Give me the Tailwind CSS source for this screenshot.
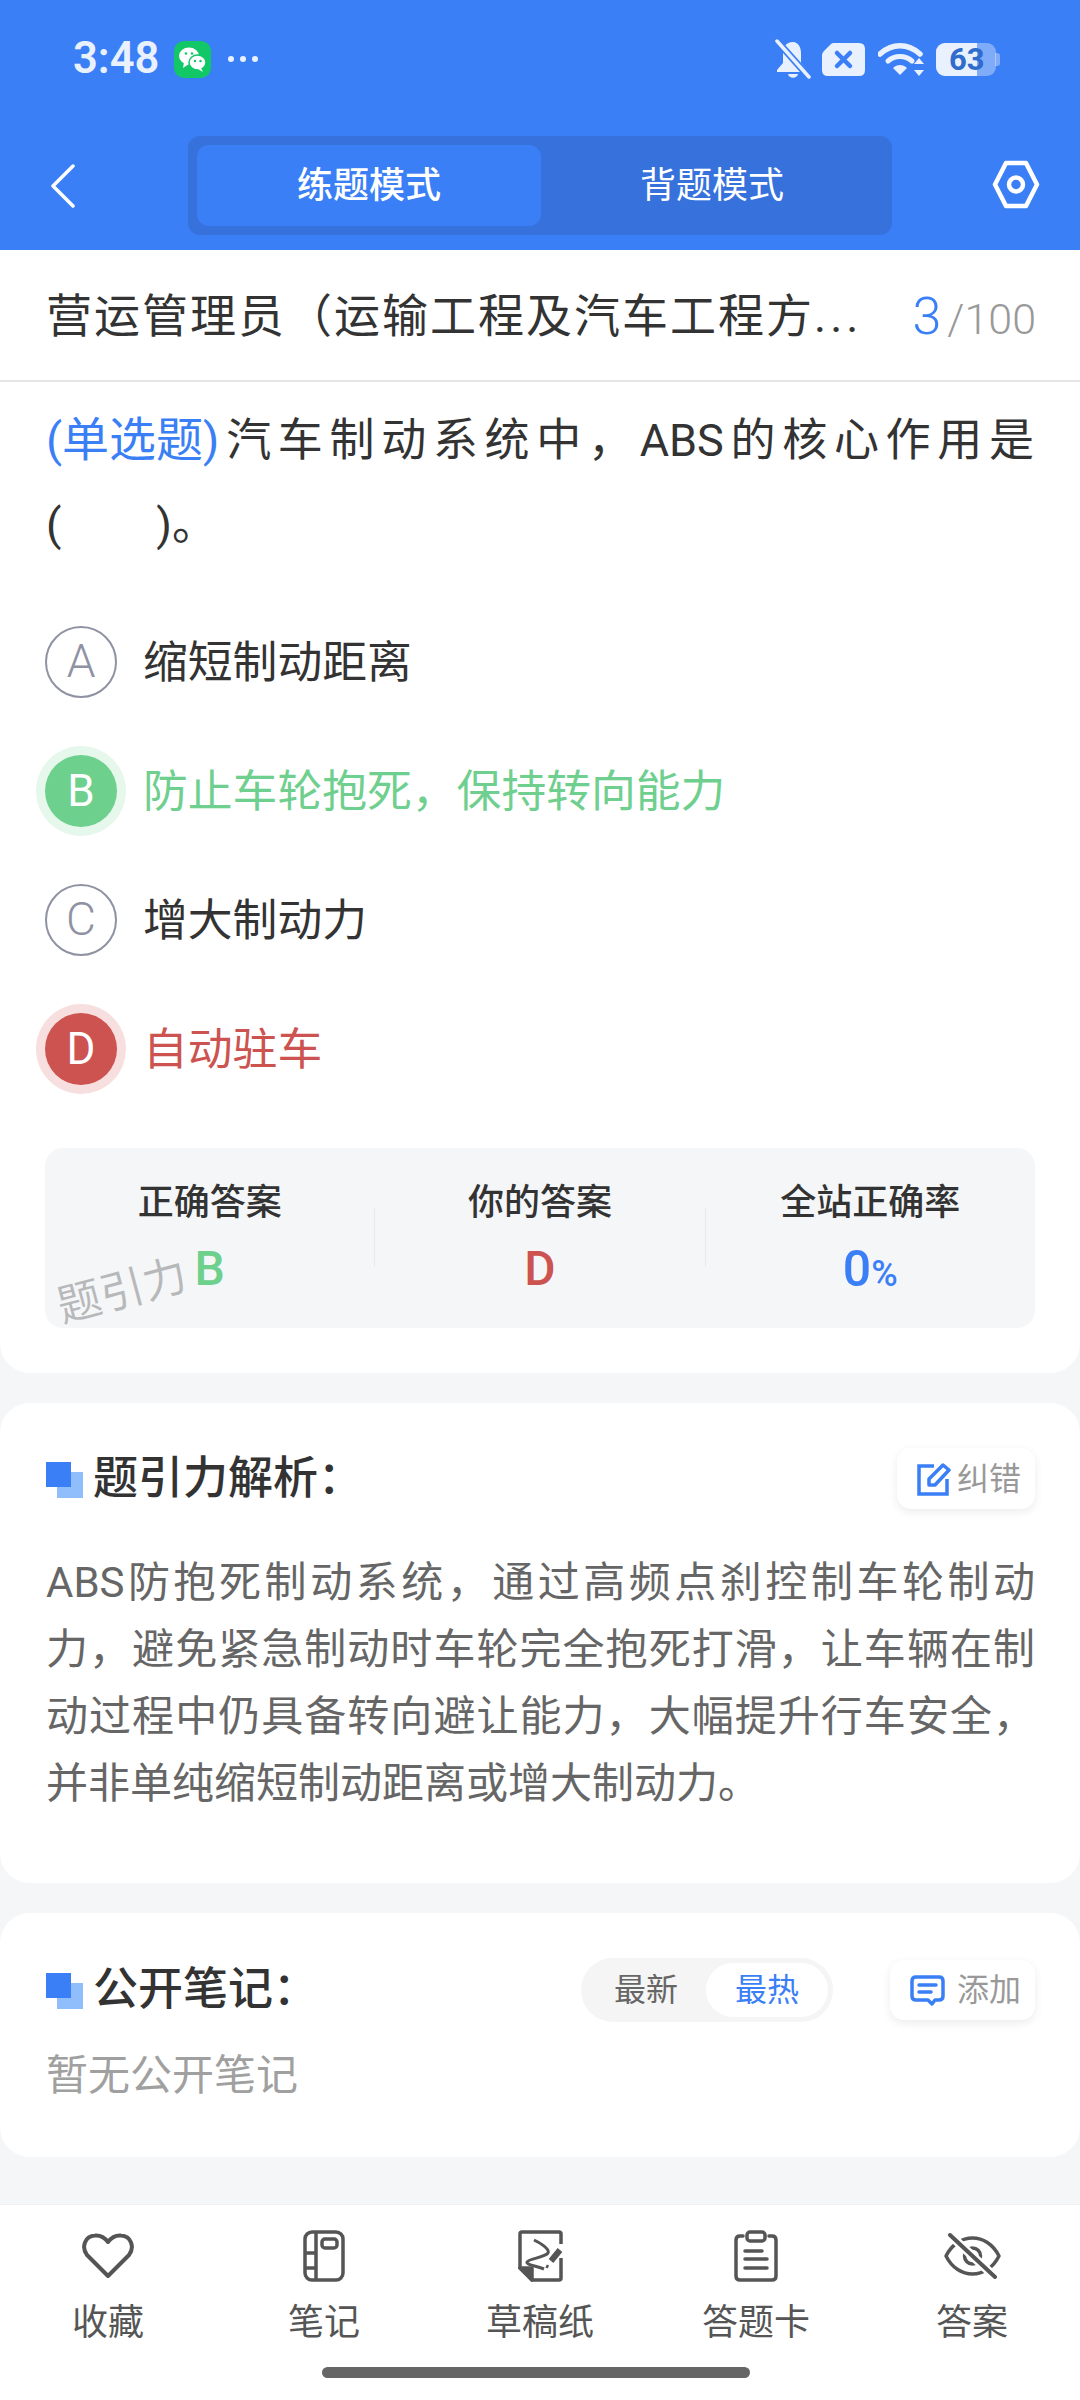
<!DOCTYPE html>
<html lang="zh-CN">
<head>
    <meta charset="UTF-8">
    <meta name="viewport" content="width=device-width, initial-scale=1.0">
    <script src="https://cdn.jsdelivr.net/npm/@tailwindcss/browser@4"></script>
    <title>练题模式</title>
</head>
<body class="bg-[#f5f6f8] font-['Roboto','Noto_Sans_CJK_SC',sans-serif] text-[#333]">
<div class="w-[1080px] h-[2400px] flex flex-col overflow-hidden">

    <!-- blue header -->
    <div class="bg-[#3b7ff6] h-[250px] shrink-0">
        <div class="h-[136px] flex items-start justify-between pl-[73px] pr-[80px] pt-[38px]">
            <div class="flex items-center h-[42px]">
                <span class="text-[43.500px] leading-[42px] font-semibold text-[#eaf1fe] w-[101px]">3:48</span>
                <svg width="37" height="37" viewBox="0 0 37 37">
                    <rect width="37" height="37" rx="10" fill="#11c766"/>
                    <ellipse cx="15" cy="15" rx="10" ry="8.5" fill="#fff"/>
                    <path d="M10 21l-1 6 6-4z" fill="#fff"/>
                    <ellipse cx="23.5" cy="21.5" rx="8.5" ry="7.5" fill="#fff" stroke="#11c766" stroke-width="1.5"/>
                    <path d="M27 27l2 4-5-3z" fill="#fff"/>
                    <circle cx="12" cy="12.5" r="1.3" fill="#11c766"/><circle cx="18" cy="12.5" r="1.3" fill="#11c766"/>
                    <circle cx="21" cy="20" r="1.2" fill="#11c766"/><circle cx="26.5" cy="20" r="1.2" fill="#11c766"/>
                </svg>
                <div class="flex gap-[6px] ml-[17px]">
                    <span class="w-[6px] h-[6px] rounded-full bg-[#eaf1fe]"></span>
                    <span class="w-[6px] h-[6px] rounded-full bg-[#eaf1fe]"></span>
                    <span class="w-[6px] h-[6px] rounded-full bg-[#eaf1fe]"></span>
                </div>
            </div>
            <div class="flex items-center h-[42px]">
                <svg width="36" height="40" viewBox="0 0 36 40" fill="#eaf1fe">
                    <path d="M18 3c-7 0-10 5-10 11v10l-6 7v2h30v-2l-6-7V14c0-6-3-11-8-11z"/>
                    <path d="M13 35h10c-1 5-9 5-10 0z"/>
                    <path d="M2 2l32 36" stroke="#3b7ff6" stroke-width="7"/>
                    <path d="M2 2l32 36" stroke="#eaf1fe" stroke-width="3.5" stroke-linecap="round"/>
                </svg>
                <svg class="ml-[11px]" width="43" height="33" viewBox="0 0 43 33">
                    <path d="M12 0h25q6 0 6 6v21q0 6-6 6H6q-6 0-6-6V12q0-2 2-4l7-7q1-1 3-1z" fill="#eaf1fe"/>
                    <path d="M15 10l13 13M28 10L15 23" stroke="#3b7ff6" stroke-width="4.5" stroke-linecap="round"/>
                </svg>
                <svg class="ml-[13px]" width="47" height="33" viewBox="0 0 47 33" fill="none">
                    <path d="M2 11c12-11 28-11 40 0" stroke="#eaf1fe" stroke-width="5.5" stroke-linecap="round"/>
                    <path d="M10 18c7-6 17-6 24 0" stroke="#eaf1fe" stroke-width="5" stroke-linecap="round"/>
                    <path d="M15 25c4-4 10-4 14 0l-7 7z" fill="#eaf1fe"/>
                    <path d="M41 15l5 6H36zM41 33l5-6H36z" fill="#eaf1fe"/>
                </svg>
                <div class="relative w-[64px] h-[33px] ml-[11px]">
                    <div class="absolute left-0 top-0 w-[60px] h-[33px] rounded-[9px] bg-white/35"></div>
                    <div class="absolute right-0 top-[10px] w-[5px] h-[13px] rounded-r-[3px] bg-white/35"></div>
                    <div class="absolute left-0 top-0 w-[41px] h-[33px] rounded-l-[9px] bg-[#eaf1fe]"></div>
                    <span class="absolute left-[13px] top-0 text-[31px] leading-[33px] font-bold text-[#2f6ccb]">63</span>
                </div>
            </div>
        </div>
        <div class="flex items-start">
            <svg class="ml-[50px] mt-[28px]" width="26" height="44" viewBox="0 0 26 44" fill="none">
                <path d="M23 2L3 22l20 20" stroke="#fff" stroke-width="3.5" stroke-linecap="round" stroke-linejoin="round"/>
            </svg>
            <div class="ml-[112px] w-[704px] h-[99px] rounded-[12px] bg-[#3771dc] flex items-center pl-[9px]">
                <div class="w-[344px] h-[81px] rounded-[12px] bg-[#3b7ff6] flex items-center justify-center text-[36px] font-medium text-white">练题模式</div>
                <div class="flex-1 text-center text-[36px] text-white pr-[9px]">背题模式</div>
            </div>
            <svg class="ml-[100px] mt-[24px]" width="48" height="49" viewBox="0 0 48 49" fill="none" stroke="#fff" stroke-width="4.5" stroke-linejoin="round">
                <path d="M14 3h20l11 21.500-11 21.500H14L3 24.500z"/>
                <circle cx="24" cy="24.500" r="7"/>
            </svg>
        </div>
    </div>

    <!-- question card -->
    <div class="bg-white rounded-b-[30px] shrink-0">
        <div class="h-[132px] border-b-2 border-[#e5e5e5] flex items-center justify-between pl-[46px] pr-[44px] pt-[3px]">
            <div class="w-[810px] text-[46px] tracking-[2px] whitespace-nowrap">营运管理员（运输工程及汽车工程方<span class="tracking-[4px]">...</span></div>
            <div class="flex items-baseline leading-none">
                <span class="text-[52px] font-light text-[#3b7ff6]">3</span>
                <span class="text-[43px] font-light text-[#999] ml-[6px]">/100</span>
            </div>
        </div>
        <p class="mt-[17px] mx-[46px] text-[45px] leading-[84px] text-justify">
            <span class="inline-block text-[47px] leading-[60px] text-[#3b7ff6]">(单选题)</span>汽车制动系统中，ABS的核心作用是(&nbsp;&nbsp;&nbsp;&nbsp;&nbsp;&nbsp;&nbsp;&nbsp;&#8239;)。
        </p>
        <div class="mt-[30px] px-[45px]">
            <div class="h-[129px] flex items-center">
                <span class="w-[72px] h-[72px] rounded-full border-2 border-[#8f92a3] flex items-center justify-center text-[46px] font-light text-[#8f92a3]">A</span>
                <span class="ml-[26px] mt-[2px] text-[44.800px]">缩短制动距离</span>
            </div>
            <div class="h-[129px] flex items-center text-[#6fcf8e]">
                <span class="w-[72px] h-[72px] rounded-full bg-[#6dd08c] ring-[9px] ring-[#e6f7ec] flex items-center justify-center text-[44px] text-white">B</span>
                <span class="ml-[26px] mt-[2px] text-[44.800px]">防止车轮抱死，保持转向能力</span>
            </div>
            <div class="h-[129px] flex items-center">
                <span class="w-[72px] h-[72px] rounded-full border-2 border-[#8f92a3] flex items-center justify-center text-[46px] font-light text-[#8f92a3]">C</span>
                <span class="ml-[26px] mt-[2px] text-[44.800px]">增大制动力</span>
            </div>
            <div class="h-[129px] flex items-center text-[#cd5350]">
                <span class="w-[72px] h-[72px] rounded-full bg-[#cd5350] ring-[9px] ring-[#f8dfdf] flex items-center justify-center text-[44px] text-white">D</span>
                <span class="ml-[26px] mt-[2px] text-[44.800px]">自动驻车</span>
            </div>
        </div>
        <div class="relative mt-[35px] mx-[45px] mb-[45px] h-[180px] rounded-[18px] bg-[#f5f6f8] flex items-start pt-[30px]">
            <div class="flex-1 text-center">
                <div class="text-[36px] leading-[50px] font-medium">正确答案</div>
                <div class="mt-[16px] text-[48px] leading-[50px] font-medium text-[#6dd08c]">B</div>
            </div>
            <div class="w-px h-[59px] mt-[30px] bg-[#e8e9eb]"></div>
            <div class="flex-1 text-center">
                <div class="text-[36px] leading-[50px] font-medium">你的答案</div>
                <div class="mt-[16px] text-[48px] leading-[50px] font-medium text-[#cd5350]">D</div>
            </div>
            <div class="w-px h-[59px] mt-[30px] bg-[#e8e9eb]"></div>
            <div class="flex-1 text-center">
                <div class="text-[36px] leading-[50px] font-medium">全站正确率</div>
                <div class="mt-[16px] text-[50px] leading-[50px] font-medium text-[#3b7ff6]">0<span class="text-[36px]">%</span></div>
            </div>
            <span class="absolute left-[11px] top-[118px] text-[44px] leading-[50px] -rotate-[15deg] text-black/25">题引力</span>
        </div>
    </div>

    <!-- analysis card -->
    <div class="mt-[30px] h-[480px] shrink-0 bg-white rounded-[30px] pt-[45px] pl-[46px] pr-[45px]">
        <div class="flex items-center justify-between h-[61px]">
            <div class="flex items-center">
                <div class="relative w-[37px] h-[36px] mt-[2px]">
                    <span class="absolute right-0 bottom-0 w-[26px] h-[26px] bg-[#90bdfb]"></span>
                    <span class="absolute left-0 top-0 w-[25px] h-[25px] bg-[#3b7ff6]"></span>
                </div>
                <span class="ml-[10px] text-[45px] font-medium">题引力解析：</span>
            </div>
            <div class="w-[138px] h-[61px] rounded-[14px] bg-white shadow-[0_3px_10px_rgba(0,0,0,0.08)] flex items-center justify-center gap-[6px] pl-[6px]">
                <svg width="34" height="34" viewBox="0 0 34 34" fill="none" stroke="#3b7ff6" stroke-width="3.5">
                    <path d="M17 4H2v28h28V17"/>
                    <path d="M12 17L26 3l6 5-14 15h-6z" stroke-linejoin="round"/>
                </svg>
                <span class="text-[32px] text-[#999]">纠错</span>
            </div>
        </div>
        <p class="mt-[40px] text-[42px] leading-[67px] text-[#666] text-justify">ABS防抱死制动系统，通过高频点刹控制车轮制动力，避免紧急制动时车轮完全抱死打滑，让车辆在制动过程中仍具备转向避让能力，大幅提升行车安全，并非单纯缩短制动距离或增大制动力。</p>
    </div>

    <!-- notes card -->
    <div class="mt-[30px] h-[244px] shrink-0 bg-white rounded-[30px] pt-[45px] pl-[46px] pr-[45px]">
        <div class="flex items-center h-[64px]">
            <div class="relative w-[37px] h-[36px] mt-[2px]">
                <span class="absolute right-0 bottom-0 w-[26px] h-[26px] bg-[#90bdfb]"></span>
                <span class="absolute left-0 top-0 w-[25px] h-[25px] bg-[#3b7ff6]"></span>
            </div>
            <span class="ml-[10px] text-[45px] font-medium">公开笔记：</span>
            <div class="ml-auto w-[252px] h-[64px] rounded-full bg-[#f5f5f5] flex items-center pl-[5px] text-[32px]">
                <span class="w-[120px] text-center text-[#666]">最新</span>
                <span class="w-[122px] h-[54px] rounded-full bg-white flex items-center justify-center text-[#3b7ff6]">最热</span>
            </div>
            <div class="ml-[57px] w-[145px] h-[60px] rounded-[14px] bg-white shadow-[0_3px_10px_rgba(0,0,0,0.08)] flex items-center justify-center gap-[12px] pl-[6px]">
                <svg width="35" height="31" viewBox="0 0 35 31" fill="none" stroke="#3b7ff6" stroke-width="3.5" stroke-linejoin="round">
                    <path d="M6 2h23q4 0 4 4v15q0 4-4 4h-4l-3 4-4-4H6q-4 0-4-4V6q0-4 4-4z"/>
                    <path d="M9 10h17M9 17h12" stroke-linecap="round"/>
                </svg>
                <span class="text-[32px] text-[#999]">添加</span>
            </div>
        </div>
        <p class="mt-[20px] text-[42px] leading-[67px] text-[#a0a0a0]">暂无公开笔记</p>
    </div>

    <!-- bottom bar -->
    <div class="mt-auto h-[196px] bg-white border-t border-[#eeeeee] flex flex-col">
        <div class="grid grid-cols-5 pt-[25px] text-[36px] text-[#555] text-center">
            <div class="flex flex-col items-center">
                <div class="h-[52px] flex items-center">
                    <svg width="52" height="46" viewBox="0 0 52 46" fill="none" stroke="#555" stroke-width="4" stroke-linejoin="round">
                        <path d="M26 43L5 22C-1 14 3 3 13 2.5 19 2 23 5 26 9c3-4 7-7 13-6.500C49 3 53 14 47 22z"/>
                    </svg>
                </div>
                <span class="mt-[16px] leading-[50px]">收藏</span>
            </div>
            <div class="flex flex-col items-center">
                <svg width="42" height="52" viewBox="0 0 42 52" fill="none" stroke="#555" stroke-width="3.5">
                    <rect x="2" y="2" width="38" height="48" rx="7"/>
                    <path d="M13 2v48M2 23h11M2 38h11"/>
                    <rect x="19" y="9" width="15" height="9" rx="3"/>
                </svg>
                <span class="mt-[16px] leading-[50px]">笔记</span>
            </div>
            <div class="flex flex-col items-center">
                <svg width="45" height="52" viewBox="0 0 45 52" fill="none" stroke="#555" stroke-width="3.5">
                    <path d="M43 14V4q0-2-2-2H4Q2 2 2 4v34l12 12h27q2 0 2-2V28"/>
                    <path d="M2 38h12v12z" fill="#555" stroke-linejoin="round"/>
                    <path d="M16 10c8 4 16 9 14 13-2 4-20 6-21 9-1 3 10 4 17 7" stroke-width="3"/>
                    <path d="M42 20L33 31" stroke-width="6"/>
                    <path d="M30 35l-1.500 3" stroke-width="2.500"/>
                </svg>
                <span class="mt-[16px] leading-[50px]">草稿纸</span>
            </div>
            <div class="flex flex-col items-center">
                <svg width="44" height="52" viewBox="0 0 44 52" fill="none" stroke="#555" stroke-width="3.5" stroke-linecap="round">
                    <path d="M9 6H6Q2 6 2 10v36q0 4 4 4h32q4 0 4-4V10q0-4-4-4h-3"/>
                    <rect x="13" y="2" width="18" height="9" rx="3"/>
                    <path d="M11 21h17M11 29h22M11 38h22"/>
                </svg>
                <span class="mt-[16px] leading-[50px]">答题卡</span>
            </div>
            <div class="flex flex-col items-center">
                <div class="h-[52px] flex items-center">
                    <svg width="57" height="46" viewBox="0 0 57 46" fill="none" stroke="#555" stroke-width="3.5">
                        <path d="M2 23C14-1 43-1 55 23 43 47 14 47 2 23z" stroke-linejoin="round"/>
                        <circle cx="28.500" cy="23" r="8"/>
                        <path d="M6 2l45 42" stroke="#fff" stroke-width="9"/>
                        <path d="M6 2l45 42" stroke-width="4" stroke-linecap="round"/>
                    </svg>
                </div>
                <span class="mt-[16px] leading-[50px]">答案</span>
            </div>
        </div>
        <div class="mt-auto mb-[22px] ml-[322px] w-[428px] h-[11px] rounded-full bg-[#666]"></div>
    </div>
</div>
</body>
</html>
